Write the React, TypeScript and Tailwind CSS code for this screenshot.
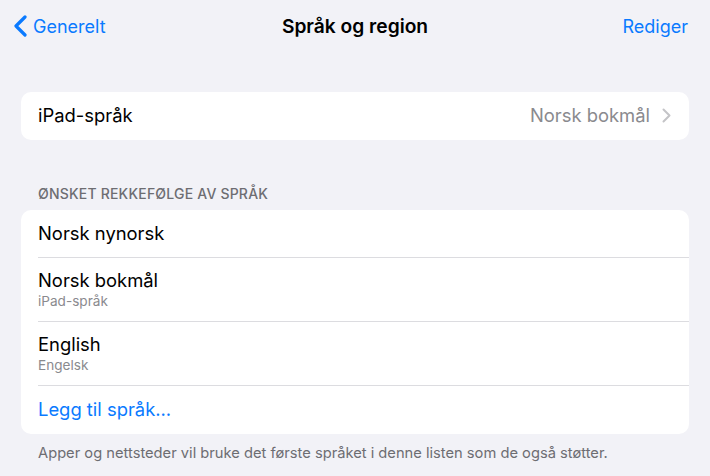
import React from 'react';

const font = { fontFamily: 'Inter, "Noto Sans", sans-serif' };

const BackChevron = () => (
    <svg width="15" height="22" viewBox="0 0 15 22" fill="none">
        <path d="M12 2L3 11l9 9" stroke="#0a7aff" strokeWidth="3.2" strokeLinecap="round" strokeLinejoin="round" />
    </svg>
);

const RowChevron = () => (
    <svg width="9" height="15" viewBox="0 0 9 15" fill="none">
        <path d="M1.5 1.5l6 6-6 6" stroke="#c4c4c7" strokeWidth="2" strokeLinecap="round" strokeLinejoin="round" />
    </svg>
);

type Lang = { name: string; sub?: string };

const languages: Lang[] = [
    { name: 'Norsk nynorsk' },
    { name: 'Norsk bokmål', sub: 'iPad-språk' },
    { name: 'English', sub: 'Engelsk' },
];

const LanguageRow: React.FC<{ lang: Lang }> = ({ lang }) => (
    <div className="border-b border-[#dcdce0] ml-[17px]">
        {lang.sub ? (
            <div className="h-[63px] flex flex-col justify-center">
                <span className="text-[18.4px] leading-[22px] text-black">{lang.name}</span>
                <span className="text-[13.6px] leading-[17px] text-[#8a8a8e] mt-[2px]">{lang.sub}</span>
            </div>
        ) : (
            <div className="h-[47px] flex items-center">
                <span className="text-[18.4px] text-black">{lang.name}</span>
            </div>
        )}
    </div>
);

const App: React.FC = () => {
    return (
        <div className="w-[710px] h-[476px] bg-[#f2f2f7] overflow-hidden" style={font}>
            <div className="h-[52px] px-[13px] flex items-center justify-between relative">
                <div className="flex items-center gap-[5px] text-[#0a7aff] text-[18px]">
                    <BackChevron />
                    <span>Generelt</span>
                </div>
                <span className="absolute left-1/2 -translate-x-1/2 text-[19.2px] font-semibold text-black">Språk og region</span>
                <span className="text-[#0a7aff] text-[18px] mr-[9px]">Rediger</span>
            </div>

            <div className="mx-[21px] mt-[40px]">
                <div className="h-[48px] bg-white rounded-[10px] pl-[17px] pr-[18px] flex items-center justify-between">
                    <span className="text-[18.4px] text-black">iPad-språk</span>
                    <div className="flex items-center gap-[12px]">
                        <span className="text-[18.4px] text-[#8a8a8e]">Norsk bokmål</span>
                        <RowChevron />
                    </div>
                </div>

                <div className="mt-[43px] mb-[6px] pl-[17px] text-[14px] font-medium text-[#6d6d72] tracking-[0.2px]">
                    ØNSKET REKKEFØLGE AV SPRÅK
                </div>

                <div className="bg-white rounded-[10px] overflow-hidden">
                    {languages.map(l => (
                        <LanguageRow key={l.name} lang={l} />
                    ))}
                    <div className="h-[48px] pl-[17px] flex items-center">
                        <span className="text-[18.4px] text-[#0a7aff]">Legg til språk...</span>
                    </div>
                </div>

                <div className="pl-[17px] mt-[8px] text-[14.7px] text-[#6d6d72]">
                    Apper og nettsteder vil bruke det første språket i denne listen som de også støtter.
                </div>
            </div>
        </div>
    );
};

export default App;
